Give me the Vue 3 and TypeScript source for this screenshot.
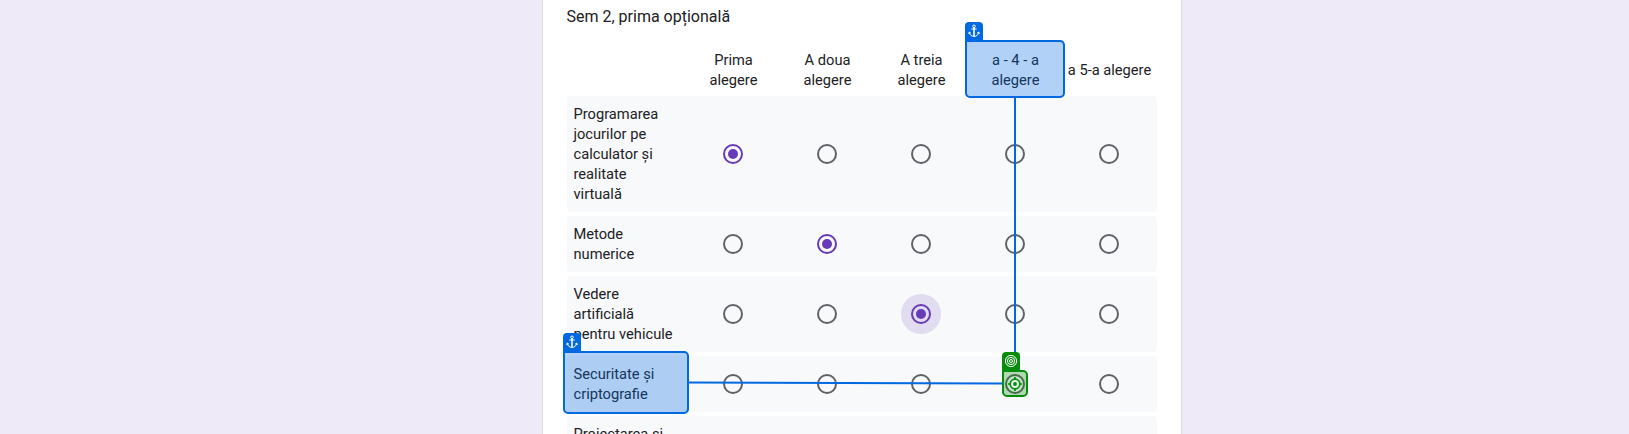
<script setup lang="ts">
interface Row {
  lines: string[]
  selected: number
  focused?: boolean
}

const columns: string[][] = [
  ['Prima', 'alegere'],
  ['A doua', 'alegere'],
  ['A treia', 'alegere'],
  ['a - 4 - a', 'alegere'],
  ['a 5-a alegere'],
]

const rows: Row[] = [
  { lines: ['Programarea', 'jocurilor pe', 'calculator și', 'realitate', 'virtuală'], selected: 0 },
  { lines: ['Metode', 'numerice'], selected: 1 },
  { lines: ['Vedere', 'artificială', 'pentru vehicule'], selected: 2, focused: true },
  { lines: ['Securitate și', 'criptografie'], selected: -1 },
  { lines: ['Proiectarea și'], selected: -1 },
]

const anchors = ['column-mark', 'row-mark']
</script>

<template>
  <div class="page">
    <main class="card">
      <h2 class="title">Sem 2, prima opțională</h2>
      <div class="grid-row header">
        <span></span>
        <div v-for="(col, i) in columns" :key="i" class="col-head">
          <div v-for="line in col" :key="line">{{ line }}</div>
        </div>
      </div>
      <div class="rows">
        <div v-for="(row, r) in rows" :key="r" class="grid-row answer">
          <div class="label">
            <div v-for="line in row.lines" :key="line">{{ line }}</div>
          </div>
          <div v-for="(_, c) in columns" :key="c" class="cell">
            <span class="halo" :class="{ focused: row.focused && row.selected === c }">
              <span class="radio" :class="{ checked: row.selected === c }"></span>
            </span>
          </div>
        </div>
      </div>
    </main>

    <svg class="links" width="1629" height="434" viewBox="0 0 1629 434">
      <line x1="1015" y1="98" x2="1015" y2="353" />
      <line x1="688" y1="382.6" x2="1003" y2="383.5" />
    </svg>

    <div v-for="name in anchors" :key="name" class="mark anchor" :class="name">
      <span class="badge">
        <svg width="12" height="14" viewBox="0 0 12 14">
          <circle cx="6" cy="2.3" r="1.3" />
          <path d="M3.3 5h5.4M1.3 8.3c.3 2.6 2.3 4.1 4.7 4.1s4.4-1.5 4.7-4.1M.6 9.8l.7-1.8 1.6 1.2M11.4 9.8l-.7-1.8-1.6 1.2" />
          <path class="shank" d="M6 3.6v8.8" />
        </svg>
      </span>
    </div>
    <div class="mark target">
      <span class="badge">
        <svg width="14" height="14" viewBox="0 0 14 14">
          <circle cx="7" cy="7" r="5.6" />
          <circle cx="7" cy="7" r="3.6" />
          <circle cx="7" cy="7" r="1.5" />
        </svg>
      </span>
      <svg class="crosshair" width="16" height="16" viewBox="0 0 16 16">
        <circle class="disc" cx="8" cy="8" r="7.5" />
        <circle class="ring" cx="8" cy="8" r="4.8" />
        <path d="M8 1v3M8 12v3M1 8h3M12 8h3" />
        <circle class="dot" cx="8" cy="8" r="1.9" />
      </svg>
    </div>
  </div>
</template>

<style>
body {
  margin: 0;
  overflow: hidden;
}
</style>

<style scoped>
.page {
  position: relative;
  height: 434px;
  overflow: hidden;
  background: #eeeaf8;
  font-family: Roboto, "Liberation Sans", sans-serif;
  color: #202124;
}
.card {
  box-sizing: border-box;
  width: 640px;
  height: 500px;
  margin-left: 542px;
  padding: 5px 24px 0;
  border: solid #dadce0;
  border-width: 0 1px;
  background: #fff;
}
.title {
  margin: 0 0 0 -0.5px;
  font-size: 16px;
  font-weight: 400;
  line-height: 24px;
}
.grid-row {
  display: grid;
  grid-template-columns: 119px repeat(5, 94px);
  align-items: center;
  box-sizing: border-box;
  width: 590px;
  font-size: 14.667px;
  line-height: 20px;
}
.header {
  height: 52px;
  margin-top: 15px;
}
.col-head {
  display: flex;
  flex-direction: column;
  align-items: center;
  padding-left: 1px;
  white-space: nowrap;
}
.rows {
  display: flex;
  flex-direction: column;
  gap: 4px;
}
.answer {
  padding: 8px 0;
  border-radius: 4px;
  background: #f8f9fb;
}
.answer:last-child {
  height: 76px;
}
.label {
  align-self: start;
  padding-left: 6.5px;
  white-space: nowrap;
}
.cell {
  display: flex;
  justify-content: center;
}
.halo {
  display: grid;
  place-items: center;
  width: 40px;
  height: 40px;
  margin: -10px 0;
  border-radius: 50%;
}
.focused {
  background: #e2dcf0;
}
.radio {
  box-sizing: border-box;
  display: grid;
  place-items: center;
  width: 20px;
  height: 20px;
  border: 2px solid #5f6368;
  border-radius: 50%;
}
.checked {
  border-color: #673ab7;
}
.checked::after {
  content: "";
  width: 10px;
  height: 10px;
  border-radius: 50%;
  background: #673ab7;
}
.links {
  position: absolute;
  inset: 0;
  stroke: #0068e0;
  stroke-width: 2;
}
.mark {
  position: absolute;
  box-sizing: border-box;
  border: 2px solid;
  border-radius: 0 5px 5px 5px;
}
.anchor {
  border-color: #0068e0;
  background: rgba(0, 104, 224, 0.3);
}
.column-mark {
  left: 965px;
  top: 40px;
  width: 100px;
  height: 58px;
}
.row-mark {
  left: 563px;
  top: 351px;
  width: 126px;
  height: 63px;
}
.target {
  left: 1002px;
  top: 370px;
  width: 26px;
  height: 27px;
  border-color: #078c0d;
  background: rgba(7, 140, 13, 0.3);
}
.badge {
  position: absolute;
  left: -2px;
  top: -20px;
  display: grid;
  place-items: center;
  width: 18px;
  height: 18px;
  border-radius: 4px 4px 0 0;
  background: #0068e0;
}
.target .badge {
  background: #078c0d;
}
.badge svg {
  fill: none;
  stroke: #fff;
  stroke-width: 1;
}
.badge .shank {
  stroke-width: 1.6;
}
.crosshair {
  position: absolute;
  left: 3px;
  top: 4px;
  fill: none;
  stroke: #078c0d;
  stroke-width: 1.7;
}
.crosshair .disc {
  fill: rgba(255, 255, 255, 0.3);
  stroke: none;
}
.crosshair .ring {
  fill: #e4f2e6;
}
.crosshair .dot {
  fill: #078c0d;
  stroke: none;
}
</style>
